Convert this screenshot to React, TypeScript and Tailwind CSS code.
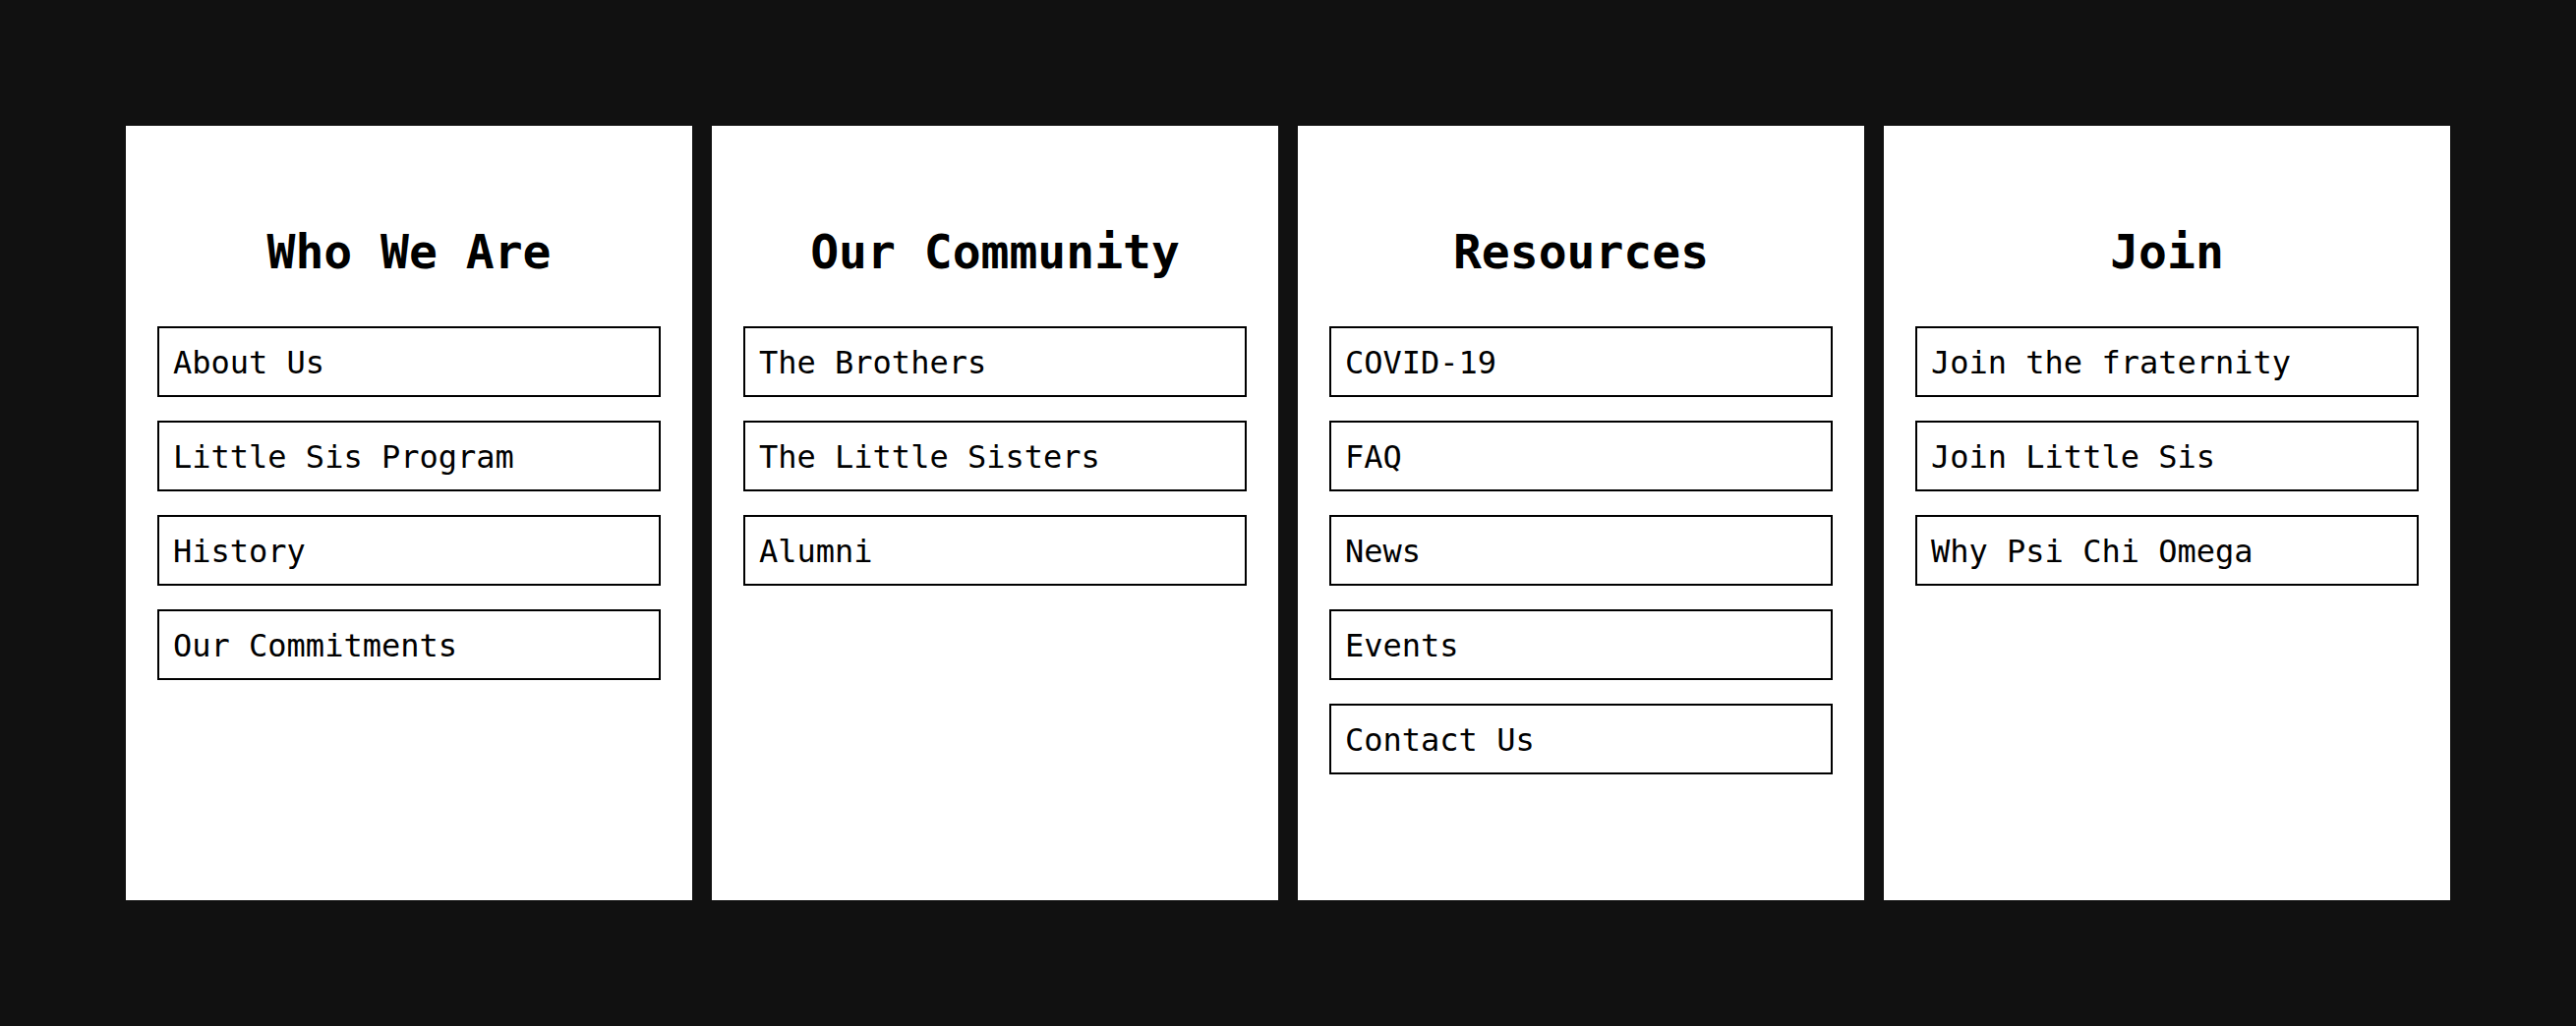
const sections = [
  {
    title: 'Who We Are',
    links: ['About Us', 'Little Sis Program', 'History', 'Our Commitments'],
  },
  {
    title: 'Our Community',
    links: ['The Brothers', 'The Little Sisters', 'Alumni'],
  },
  {
    title: 'Resources',
    links: ['COVID-19', 'FAQ', 'News', 'Events', 'Contact Us'],
  },
  {
    title: 'Join',
    links: ['Join the fraternity', 'Join Little Sis', 'Why Psi Chi Omega'],
  },
];

function SectionCard({ title, links }: { title: string; links: string[] }) {
  return (
    <div className="flex-1 min-w-0 bg-white px-8 pt-[92px] flex flex-col">
      <h2 className="text-center text-[48px] leading-[72px] font-bold text-black mb-10">{title}</h2>
      <ul className="flex flex-col gap-6">
        {links.map((link) => (
          <li key={link}>
            <a
              href="#"
              className="block border-2 border-black pl-[14px] pr-4 pt-[11px] pb-[9px] text-[32px] leading-[48px] text-black whitespace-nowrap"
            >
              {link}
            </a>
          </li>
        ))}
      </ul>
    </div>
  );
}

export default function App() {
  return (
    <div
      className="h-screen w-full bg-[#111111] p-32 flex gap-5"
      style={{ fontFamily: '"DejaVu Sans Mono", "Liberation Mono", monospace' }}
    >
      {sections.map((s) => (
        <SectionCard key={s.title} title={s.title} links={s.links} />
      ))}
    </div>
  );
}
